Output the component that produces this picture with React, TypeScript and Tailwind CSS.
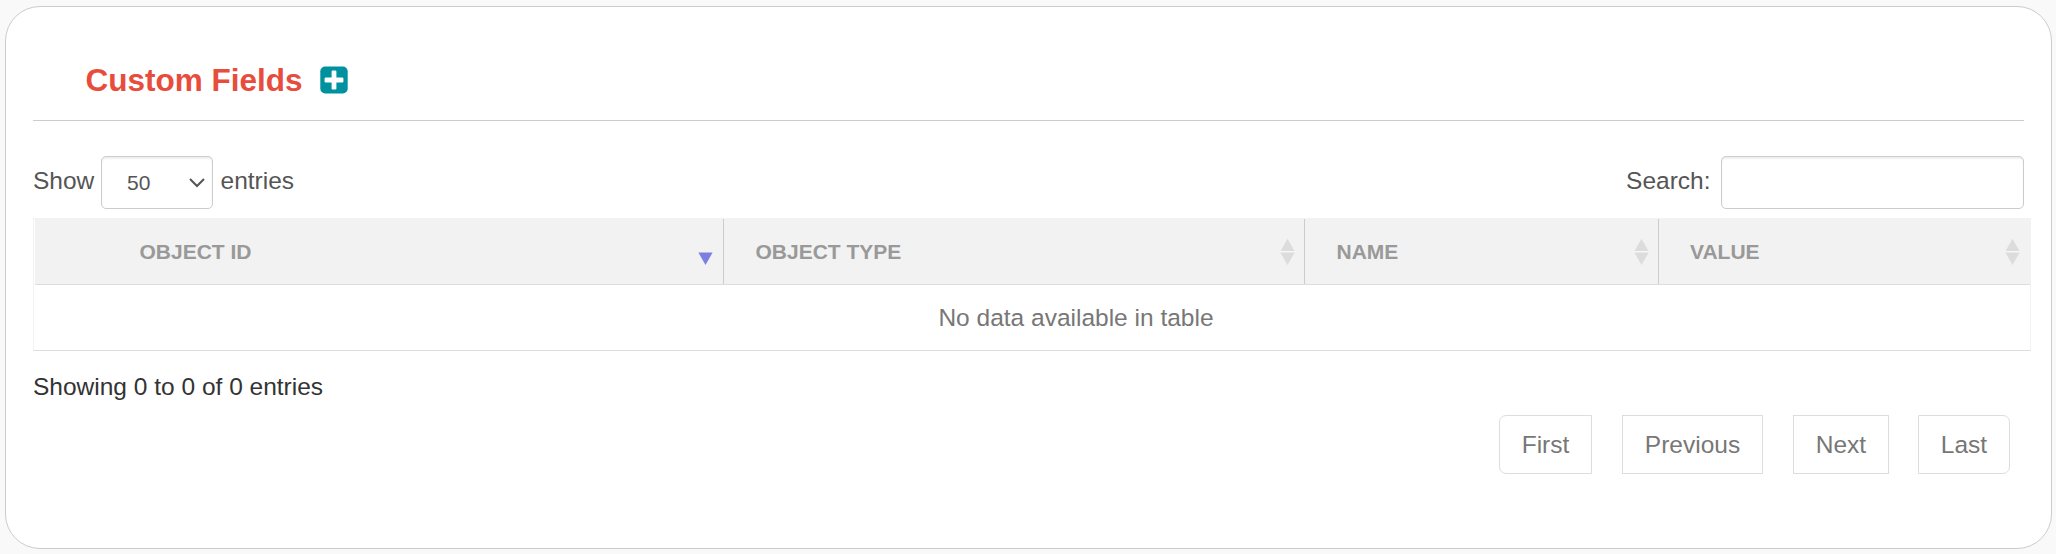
import type { ReactNode } from "react";

type SortState = "none" | "desc";

function SortIcon({ state }: { state: SortState }) {
  return (
    <svg width="16" height="28" viewBox="0 0 16 28" className="shrink-0">
      {state === "none" && <path d="M7.5 0.8L14.6 13.2H0.4Z" fill="#dcdcdc" />}
      {state === "none" && <rect x="0.5" y="13.2" width="14" height="1.4" fill="#f9f9f9" />}
      <path d="M0.4 14.6H14.6L7.5 27Z" fill={state === "desc" ? "#7b80e0" : "#dcdcdc"} />
    </svg>
  );
}

function HeaderCell({ label, className, sort = "none" }: { label: string; className: string; sort?: SortState }) {
  return (
    <div
      role="columnheader"
      className={`flex items-center justify-between text-[21px] leading-[30px] font-bold text-[#999] ${className}`}
    >
      <span>{label}</span>
      <SortIcon state={sort} />
    </div>
  );
}

function PageButton({ children, className = "" }: { children: ReactNode; className?: string }) {
  return (
    <button className={`h-[59px] border border-[#ddd] bg-white text-[24.5px] leading-[35px] text-[#777] ${className}`}>
      {children}
    </button>
  );
}

export default function App() {
  return (
    <div className="h-[554px] w-[2056px] bg-[#f9f9f9] pt-[6px] pl-[5px] font-['Liberation_Sans',Arial,sans-serif] text-[24.5px] leading-[35px] text-[#555]">
      <main className="flex h-[543px] w-[2047px] flex-col rounded-[35px] border border-[#ccc] bg-white pl-[27px]">
        <header className="flex h-[114px] w-[1991px] items-center border-b border-[#ccc] pt-[32px] pl-[52.5px]">
          <h1 className="text-[31.5px] leading-[44px] font-bold text-[#e74c3c]">Custom Fields</h1>
          <button aria-label="Add custom field" className="ml-[17px]">
            <svg width="28" height="28" viewBox="0 0 28 28" className="block">
              <rect x="0.3" y="0.5" width="27.4" height="27" rx="4.8" fill="#00919e" />
              <rect x="4.6" y="11.6" width="18.8" height="4.8" rx="1.2" fill="#fff" />
              <rect x="11.6" y="4.6" width="4.8" height="18.8" rx="1.2" fill="#fff" />
            </svg>
          </button>
        </header>

        <div className="mt-[35px] flex h-[53px] w-[1991px] justify-between">
          <div className="flex">
            <span className="mt-[7px] w-[68px]">Show</span>
            <button className="flex h-[53px] w-[112px] items-center justify-between rounded-[5px] border border-[#ccc] bg-white pr-[6px] pl-[25px] text-[21px] shadow-[inset_0_1.75px_1.75px_rgba(0,0,0,0.075)]">
              <span>50</span>
              <svg width="18" height="12" viewBox="0 0 18 12" fill="none" className="block">
                <path d="M2 2L9 9L16 2" stroke="#555" strokeWidth="2" />
              </svg>
            </button>
            <span className="mt-[7px] ml-[7.5px]">entries</span>
          </div>
          <div className="flex">
            <span className="mt-[7px] mr-[10.5px]">Search:</span>
            <input
              aria-label="Search"
              className="h-[53px] w-[303px] rounded-[5px] border border-[#ccc] bg-white shadow-[inset_0_1.75px_1.75px_rgba(0,0,0,0.075)]"
            />
          </div>
        </div>

        <div role="table" className="mt-[9px] h-[133px] w-[1998px] border border-[#f2f2f2] border-b-[#ddd]">
          <div role="row" className="ml-px flex h-[66px] border-b border-[#ddd] bg-[#f2f2f2]">
            <HeaderCell label="OBJECT ID" sort="desc" className="w-[689px] border-r border-[#ccc] pr-[9px] pl-[104.5px]" />
            <HeaderCell label="OBJECT TYPE" className="w-[581px] border-r border-[#ccc] pr-[8px] pl-[31.5px]" />
            <HeaderCell label="NAME" className="w-[354px] border-r border-[#ccc] pr-[8px] pl-[31.5px]" />
            <HeaderCell label="VALUE" className="flex-1 pr-[9px] pl-[31px]" />
          </div>
          <div role="row" className="flex h-[65px] items-center justify-center pl-[88px] text-[#777]">
            No data available in table
          </div>
        </div>

        <p className="mt-[18px] text-[#333]">Showing 0 to 0 of 0 entries</p>

        <nav className="mt-[11px] flex w-[1977px] justify-end">
          <PageButton className="w-[93px] rounded-l-[7px]">First</PageButton>
          <PageButton className="ml-[30px] w-[141px]">Previous</PageButton>
          <PageButton className="ml-[30px] w-[96px]">Next</PageButton>
          <PageButton className="ml-[29px] w-[92px] rounded-r-[7px]">Last</PageButton>
        </nav>
      </main>
    </div>
  );
}
